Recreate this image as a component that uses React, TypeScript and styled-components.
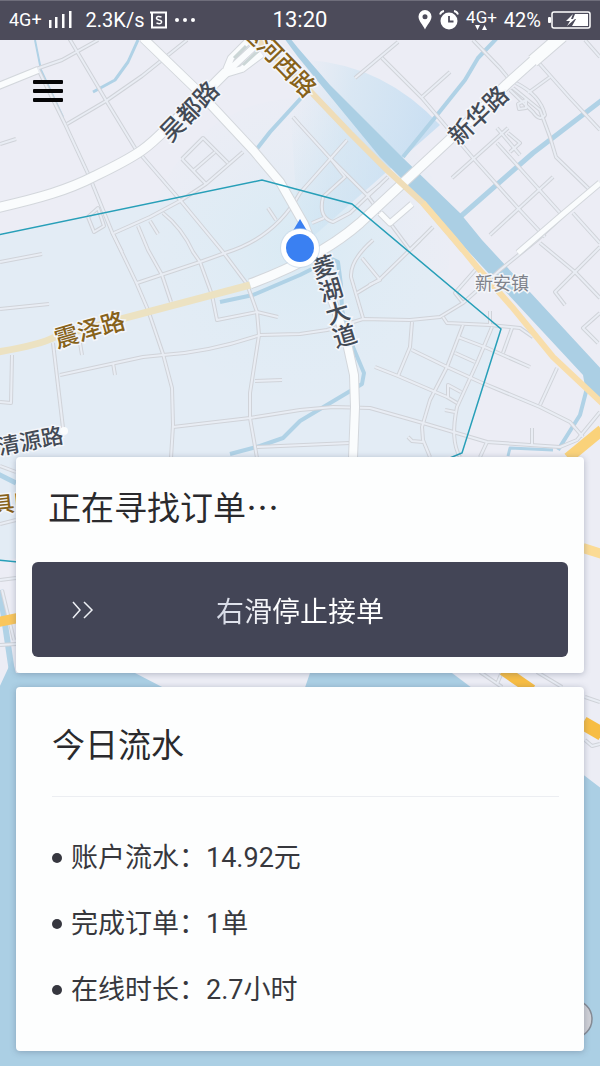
import React from 'react';
import styled, { createGlobalStyle } from 'styled-components';

const cjk = '"Noto Sans CJK SC", sans-serif';
const mixed = 'Roboto, "Noto Sans CJK SC", sans-serif';

const GlobalStyle = createGlobalStyle`
  * { box-sizing: border-box; }
  body { margin: 0; background: #ecedf5; font-family: ${mixed}; }
  h1, h2, ul, dl { margin: 0; padding: 0; }
`;

const Screen = styled.div`
  display: flex;
  flex-direction: column;
  min-height: 100vh;
`;

const StatusBar = styled.header`
  display: grid;
  grid-template-columns: 1fr auto 1fr;
  align-items: center;
  height: 40px;
  padding: 0 9px;
  background: #4c4b5a;
  box-shadow: inset 0 1px 0 #6f6e7b;
  color: #fff;
`;

const StatusGroup = styled.div<{ $end?: boolean }>`
  display: flex;
  align-items: center;
  justify-content: ${(p) => (p.$end ? 'flex-end' : 'flex-start')};
  gap: ${(p) => (p.$end ? 7 : 6)}px;
`;

const StatusText = styled.span<{ $size: number }>`
  font-size: ${(p) => p.$size}px;
  line-height: 24px;
  white-space: nowrap;
`;

const Speed = styled(StatusText)`
  padding-left: 8px;
`;

const Network = styled.span`
  display: flex;
  flex-direction: column;
  align-items: center;
  font-size: 17px;
  line-height: 16px;
`;

const Body = styled.main`
  position: relative;
  flex: 1;
  display: flex;
  flex-direction: column;
  justify-content: flex-end;
  gap: 14px;
  padding: 30px 16px 15px;
  overflow: hidden;
`;

const MapCanvas = styled.svg`
  position: absolute;
  inset: 0;
  width: 100%;
  height: 100%;
`;

const MenuButton = styled.button`
  position: relative;
  display: flex;
  align-items: center;
  justify-content: center;
  width: 44px;
  height: 42px;
  margin: 0 auto auto 10px;
  padding: 0;
  border: 0;
  background: none;
`;

const Card = styled.section`
  position: relative;
  border-radius: 4px;
  background: #fdfefe;
  box-shadow: 0 1px 6px rgba(70, 80, 105, 0.35);
`;

const OrderCard = styled(Card)`
  padding: 25px 16px 16px;
`;

const IncomeCard = styled(Card)`
  padding: 32px 25px 28px 36px;
`;

const Title = styled.h1`
  font: 400 33px/48px ${cjk};
  color: #2a2a2d;
`;

const OrderTitle = styled(Title)`
  padding: 0 16px 32px;
`;

const IncomeTitle = styled(Title)`
  padding-bottom: 29px;
  border-bottom: 1px solid #eceef2;
`;

const SlideButton = styled.button`
  display: grid;
  grid-template-columns: 1fr auto 1fr;
  align-items: center;
  width: 100%;
  height: 95px;
  padding: 0 40px;
  border: 0;
  border-radius: 6px;
  background: #434556;
  color: #fff;
  font: 400 28px/40px ${cjk};
`;

const SlideLabel = styled.span`
  background: linear-gradient(90deg, #d3d7e4, #fff 40%);
  background-clip: text;
  color: transparent;
`;

const StatList = styled.dl`
  padding-top: 28px;
`;

const StatRow = styled.div`
  display: flex;
  align-items: center;
  height: 66px;
  color: #37383d;
  font: 400 27px/40px ${mixed};

  &::before {
    content: '';
    width: 10px;
    height: 10px;
    margin-right: 9px;
    border-radius: 50%;
    background: #36373f;
  }

  dd { margin: 0; }
`;

const RoadName = styled.text`
  font-family: ${cjk};
  font-weight: 500;
  text-anchor: middle;
  dominant-baseline: central;
  stroke: #f4f6fa;
  stroke-width: 3px;
  paint-order: stroke;
`;

const VerticalRoadName = styled(RoadName)`
  writing-mode: vertical-rl;
  dominant-baseline: auto;
`;

const TownName = styled(RoadName)`
  font-weight: 400;
`;

const lanes = [
  'M36 69 L62 60 L98 40', 'M38 69 L65 124 L90 178 L112 232 L136 282 L148 310 L163 354 L172 388 L173 425 L171 458',
  'M67 124 L106 101 L142 76 L187 40', 'M69 38 L107 102 L135 148 L180 200 L223 252 L247 284 L257 312 L259 335 L250 393 L250 418 L257 458',
  'M0 144 L16 139', 'M182 159 L203 138 L228 163', 'M182 159 L206 184', 'M193 171 L215 152',
  'M243 152 L206 184 L180 201 L150 217 L114 233', 'M88 217 L98 208 L104 226 L94 232 L88 217',
  'M163 213 Q182 228 193 252 L200 262 L212 295 L217 320 L257 312 L278 317', 'M138 226 L148 250 L162 275 L171 302',
  'M137 283 L200 262 L225 253 Q275 238 300 193 L347 140', 'M112 232 L122 252', 'M150 221 L158 234', 'M268 208 L276 220', 'M293 117 L300 125',
  'M398 42 L355 78', 'M382 58 L422 98 L473 158 L517 207 L545 237', 'M450 72 L422 97', 'M452 178 L508 128',
  'M490 235 L553 177', 'M497 143 L517 165 L562 215', 'M473 40 L500 68 L510 80', 'M573 213 L600 243',
  'M513 88 L540 110 L550 137 L556 157 L590 190', 'M516 83 Q540 95 545 115 Q540 122 533 112 L510 90', 'M518 104 L526 100 L526 108 L519 109 Z',
  'M538 62 L570 98 L600 130', 'M550 77 L528 93', 'M585 40 L600 57', 'M497 128 L520 155', 'M508 133 L520 143 L510 152',
  'M300 125 L330 158 L367 195 L381 214', 'M330 158 L345 177 L323 197 Q318 218 333 222 L350 213 L388 177', 'M312 223 L324 218', 'M367 195 L380 185',
  'M390 223 L410 250', 'M433 227 L410 250', 'M420 240 L380 279 L357 293', 'M373 240 Q350 260 351 277 L363 318', 'M362 258 L380 280 L369 285',
  'M0 262 L42 254', 'M0 309 L49 304', 'M12 355 L11 403 L0 402', 'M53 343 L63 428', 'M60 375 L143 357 L163 355 Q210 352 260 335 L300 334 L327 330 L363 319 L410 320 L440 317 L463 303 L500 270 L537 240 L580 200',
  'M113 363 L115 375', 'M80 343 L82 355', 'M255 381 L282 380', 'M173 427 L250 418 L300 410 L333 407 L370 408 L423 423 L487 442 L560 447 L577 440 L600 412',
  'M257 447 L350 443', 'M443 317 L447 323 L490 325 L520 328 L533 337', 'M412 322 L410 347 L398 376', 'M375 367 L398 376 L447 397 L457 403',
  'M412 350 L447 367 L480 382 L540 407 L570 422 L583 437', 'M463 325 L447 367 L430 400 L422 427 L423 440 L430 457',
  'M492 327 L477 363 L457 407 Q450 440 460 457', 'M458 337 L487 348 L530 367', 'M512 328 L503 353', 'M455 353 L475 362', 'M448 397 L448 385 L461 392', 'M445 410 L455 412',
  'M557 368 L540 405', 'M600 298 L575 272 L540 243', 'M600 247 L575 272 L555 292 L565 305', 'M600 313 L583 328 L598 343', 'M477 268 L455 293 L463 303', 'M490 311 L490 326',
  'M408 437 L412 441 L423 442', 'M532 428 L532 445', 'M487 442 L480 457', 'M0 466 L16 472', 'M0 524 L16 520', 'M0 580 L16 578', 'M2 590 L14 640', 'M0 645 L16 644',
  'M480 672 L502 687', 'M502 672 L497 684', 'M537 672 L562 687', 'M585 697 L600 702', 'M585 740 L592 746 L600 744',
];

const avenues: Array<[string, number]> = [
  ['M-4 87 L38 70', 6],
  ['M-4 208 C40 198 68 190 95 176 C145 152 150 145 170 125 L215 83 L226 72', 9],
  ['M143 38 L197 90 L253 150 L280 182 L304 224 L322 270 L347 343 L354 375 L355 407 L353 458', 8],
  ['M600 183 L562 215 L518 253', 5],
  ['M380 213 L390 223 L412 204', 5],
  ['M224 75 L231 58 L247 42 M222 75 L242 69 L262 54 M226 73 L254 47', 6],
  ['M562 36 L533 61', 12],
  ['M536 58 L507 84 L460 130 L403 183 L360 223 Q320 258 250 284', 9],
];

const waterways: Array<[string, number]> = [
  ['M35 40 L41 70 L63 117', 2], ['M138 40 L128 62 L115 80 L93 92', 3],
  ['M302 97 L270 132 L256 150 L278 181', 4], ['M497 38 L478 58 L465 80 L433 120 L403 157', 4],
  ['M602 100 L533 153 L460 217', 5], ['M220 302 L253 295 L300 275 L318 266', 4],
  ['M330 258 L338 262 L341 285 L342 310 L353 347 L364 373 L362 384 L300 421 L283 438 L260 446 L230 454', 4],
  ['M587 388 L580 415 L558 450', 4], ['M508 456 L510 448 L553 450', 3], ['M-2 474 L16 483', 5], ['M0 590 L12 672', 6],
];

function CityMap() {
  return (
    <MapCanvas viewBox="0 40 600 1026" preserveAspectRatio="xMidYMin slice" role="img" aria-label="地图">
      <defs>
        <linearGradient id="sweep" gradientUnits="userSpaceOnUse" x1="290" y1="120" x2="420" y2="150">
          <stop offset="0" stopColor="#cfe6f2" stopOpacity="0" />
          <stop offset="0.4" stopColor="#cde3f2" stopOpacity="0.6" />
          <stop offset="1" stopColor="#bddaf1" stopOpacity="0.7" />
        </linearGradient>
        <radialGradient id="range">
          <stop offset="0" stopColor="#cfe8f3" stopOpacity="0.5" />
          <stop offset="1" stopColor="#dfecf5" stopOpacity="0.1" />
        </radialGradient>
      </defs>
      <rect y="40" width="600" height="1026" fill="#ecedf5" />
      <path d="M0 235 L262 180 L352 204 L501 329 L462 453 L0 562 Z" fill="#e3ecf5" />
      <circle cx="300" cy="248" r="150" fill="url(#range)" />
      <path d="M300 248 L290 110 L310 60 Q385 66 440 125 Z" fill="url(#sweep)" />

      <g fill="none" stroke="#b0d2e6" strokeLinejoin="round">
        {waterways.map(([d, w]) => <path key={d} d={d} strokeWidth={w} />)}
      </g>
      <g fill="#abcfe4">
        <path d="M284 38 L298 57 L380 157 L403 180 L440 220 L467 250 L583 375 L586 392 L602 402 V370 L482 240 L460 213 L402 157 L330 85 L298 48 L290 38 Z" />
        <path d="M-2 690 L12 660 L16 673 L135 673 L166 689 L166 1068 L-2 1068 Z" />
        <path d="M311 670 L448 670 L472 688 L472 1068 L300 1068 L300 702 Z" />
        <path d="M472 688 L585 776 L602 789 V1068 H160 V900 Z" />
      </g>
      <path d="M160 688 L310 688 L310 800 L160 800 Z" fill="#ecedf5" />

      <g fill="none" strokeLinejoin="round">
        <g stroke="#d0d3d9" strokeWidth="4">{lanes.map((d) => <path key={d} d={d} />)}</g>
        <g stroke="#e9edf4" strokeWidth="2">{lanes.map((d) => <path key={d} d={d} />)}</g>
        {avenues.map(([d, w]) => <path key={d} d={d} stroke="#d3d7dc" strokeWidth={w + 2} />)}
        {avenues.map(([d, w]) => <path key={d} d={d} stroke="#fafcfd" strokeWidth={w} />)}
        <path d="M234 58 L246 46 M243 65 L258 51" stroke="#cbd6d6" strokeWidth="3" />
      </g>
      <circle cx="64" cy="431" r="4" fill="#fafcfd" />

      <g fill="none">
        <path d="M-2 352 Q40 345 55 337 L125 318 L250 285" stroke="#ece2c2" strokeWidth="7" />
        <path d="M258 40 L311 92 L350 133 L387 170 L423 203 L463 250" stroke="#efddb8" strokeWidth="6" />
        <path d="M423 203 L455 240 L477 267 L513 308 L553 357 L602 403" stroke="#f8deab" strokeWidth="6" />
        <path d="M602 430 L568 458" stroke="#fad27a" strokeWidth="11" />
        <path d="M583 548 L602 554" stroke="#fbdb95" strokeWidth="10" />
        <path d="M583 723 L602 734" stroke="#f7bd44" strokeWidth="14" />
        <path d="M503 670 L532 690" stroke="#f7bd44" strokeWidth="11" />
        <path d="M-2 622 L18 618" stroke="#f9c65c" strokeWidth="10" />
        <path d="M-2 235 L262 180 L352 204 L501 329 L462 453 L440 462 M-2 560 L18 562" stroke="#279fb8" strokeWidth="1.5" />
      </g>

      <g fill="#434a55" fontSize="24">
        <RoadName transform="translate(188 110) rotate(-46)">吴都路</RoadName>
        <RoadName transform="translate(477 114) rotate(-44)">新华路</RoadName>
        <RoadName transform="translate(30 439) rotate(-11)" fontSize="22">清源路</RoadName>
        <VerticalRoadName transform="translate(334 301) rotate(-17)">菱湖大道</VerticalRoadName>
      </g>
      <g fill="#87621a" fontSize="24">
        <RoadName transform="translate(280 57) rotate(46)">运河西路</RoadName>
        <RoadName transform="translate(89 328) rotate(-16)">震泽路</RoadName>
        <RoadName transform="translate(14 501) rotate(-6)" fontSize="22">具区</RoadName>
      </g>
      <TownName transform="translate(502 282)" fontSize="18" fill="#80838b">新安镇</TownName>

      <path d="M300 219 L309 234 H291 Z" fill="#3a80f2" />
      <circle cx="300" cy="248" r="20" fill="#c4d5e6" fillOpacity="0.6" />
      <circle cx="300" cy="248" r="19" fill="#fff" />
      <circle cx="300" cy="248" r="14" fill="#3a80f2" />
      <circle cx="573" cy="1019" r="19" fill="#cfd0d6" stroke="#858a94" strokeWidth="1.5" />
    </MapCanvas>
  );
}

const SignalIcon = () => (
  <svg width="24" height="18" viewBox="0 0 24 18" fill="#fff" aria-hidden="true">
    <rect x="1" y="9" width="2.500" height="8" /><rect x="7" y="6" width="2.500" height="11" />
    <rect x="14" y="3" width="2.500" height="14" /><rect x="21" y="0" width="2.500" height="17" />
  </svg>
);

const SquareIcon = () => (
  <svg width="17" height="18" viewBox="0 0 17 18" fill="none" stroke="#fff" aria-hidden="true">
    <path d="M0 1.5 H16 V16.5 H2 V1" strokeWidth="2" />
    <path d="M11.5 6 Q7 4.500 6.500 7 Q6.500 8.500 9 9 Q12 9.500 11.500 11.500 Q10.500 13.500 6.500 12" strokeWidth="1.5" />
  </svg>
);

const DotsIcon = () => (
  <svg width="22" height="6" viewBox="0 0 22 6" fill="#fff" aria-hidden="true">
    <circle cx="4" cy="3" r="2" /><circle cx="12" cy="3" r="2" /><circle cx="20" cy="3" r="2" />
  </svg>
);

const PinIcon = () => (
  <svg width="14" height="20" viewBox="0 0 14 20" aria-hidden="true">
    <path d="M7 0 A6.500 6.500 0 0 1 13.500 6.500 C13.500 11 9 15 7 19.500 C5 15 0.500 11 0.500 6.500 A6.500 6.500 0 0 1 7 0 Z M7 4.200 A2.500 2.500 0 1 0 7 9.200 A2.500 2.500 0 1 0 7 4.200 Z" fill="#fff" fillRule="evenodd" />
  </svg>
);

const AlarmIcon = () => (
  <svg width="20" height="20" viewBox="0 0 20 20" fill="none" aria-hidden="true">
    <circle cx="10" cy="11" r="8.500" fill="#fff" />
    <path d="M1 4.500 Q2 1.500 5 1 M19 4.500 Q18 1.500 15 1" stroke="#fff" strokeWidth="1.800" />
    <path d="M10 6 V11.500 H14.500" stroke="#4c4b5a" strokeWidth="1.800" />
  </svg>
);

const BatteryIcon = () => (
  <svg width="43" height="18" viewBox="0 0 43 18" aria-hidden="true">
    <rect x="0" y="6" width="3" height="6" rx="1" fill="#fff" />
    <rect x="4" y="1" width="38" height="16" rx="2" fill="none" stroke="#fff" strokeWidth="1.500" />
    <path d="M27 3 H40 V15 H24 L28 8 H25 Z" fill="#fff" />
    <path d="M25 3 L18 10 H22 L19 15 L27 8 H23 Z" fill="#fff" />
  </svg>
);

const stats = [
  { label: '账户流水：', value: '14.92元' },
  { label: '完成订单：', value: '1单' },
  { label: '在线时长：', value: '2.7小时' },
];

export default function App() {
  return (
    <Screen>
      <GlobalStyle />
      <StatusBar>
        <StatusGroup>
          <StatusText $size={18}>4G+</StatusText>
          <SignalIcon />
          <Speed $size={20}>2.3K/s</Speed>
          <SquareIcon />
          <DotsIcon />
        </StatusGroup>
        <StatusText $size={22}>13:20</StatusText>
        <StatusGroup $end>
          <PinIcon />
          <AlarmIcon />
          <Network>
            4G+
            <svg width="14" height="6" viewBox="0 0 14 6" fill="#fff" aria-hidden="true">
              <path d="M1 0 H6 L3.500 5 Z M8 5 H13 L10.500 0 Z" />
            </svg>
          </Network>
          <StatusText $size={20}>42%</StatusText>
          <BatteryIcon />
        </StatusGroup>
      </StatusBar>
      <Body>
        <CityMap />
        <MenuButton aria-label="菜单">
          <svg width="30" height="22" viewBox="0 0 30 22" fill="#050507" aria-hidden="true">
            <rect y="0" width="30" height="4" rx="1" />
            <rect y="9" width="30" height="4" rx="1" />
            <rect y="18" width="30" height="4" rx="1" />
          </svg>
        </MenuButton>
        <OrderCard>
          <OrderTitle>正在寻找订单…</OrderTitle>
          <SlideButton>
            <svg width="22" height="18" viewBox="0 0 22 18" fill="none" stroke="#eef0f5" strokeWidth="1.500" aria-hidden="true">
              <path d="M1 1 L8 9 L1 17 M12 1 L20 9 L12 17" />
            </svg>
            <SlideLabel>右滑停止接单</SlideLabel>
          </SlideButton>
        </OrderCard>
        <IncomeCard>
          <IncomeTitle as="h2">今日流水</IncomeTitle>
          <StatList>
            {stats.map((s) => (
              <StatRow key={s.label}>
                <dt>{s.label}</dt>
                <dd>{s.value}</dd>
              </StatRow>
            ))}
          </StatList>
        </IncomeCard>
      </Body>
    </Screen>
  );
}
